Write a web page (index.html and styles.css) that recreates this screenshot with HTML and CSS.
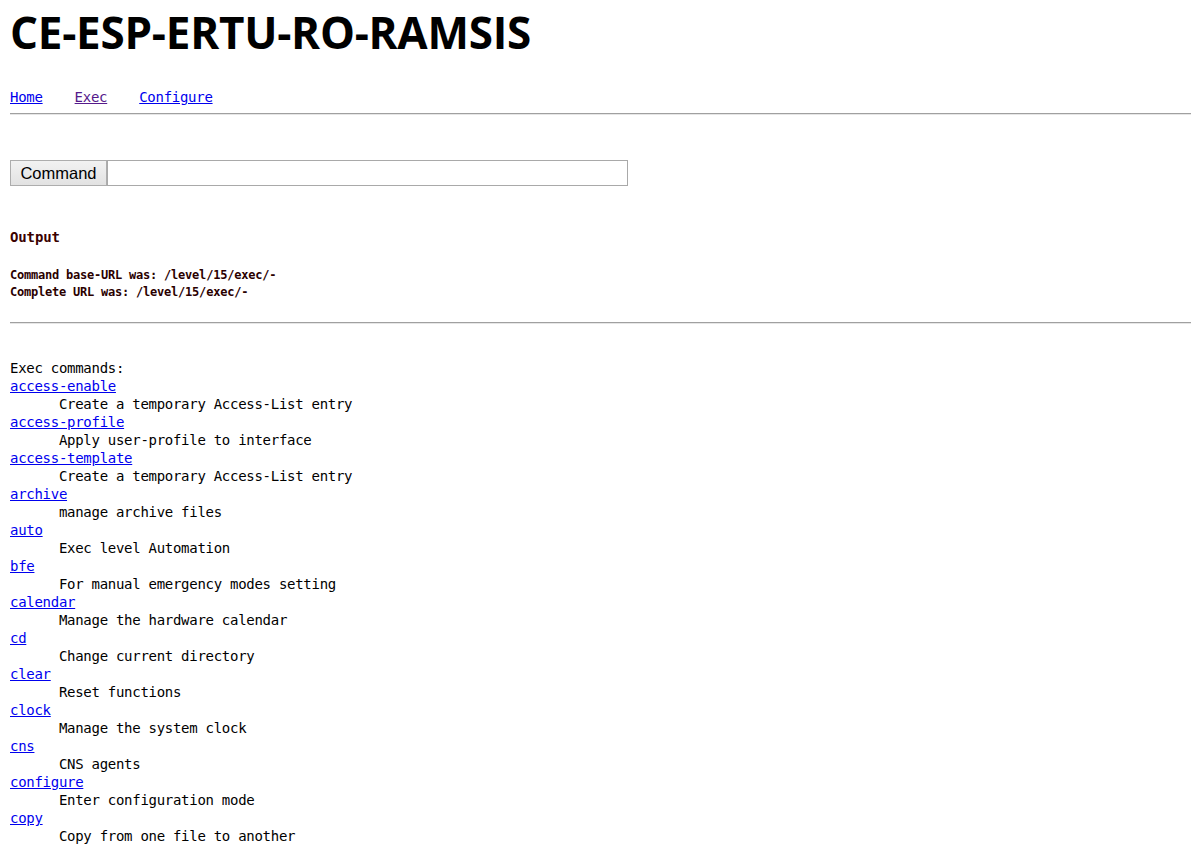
FILE: index.html
```html
<!DOCTYPE html>
<html>
<head>
<meta charset="utf-8">
<title>CE-ESP-ERTU-RO-RAMSIS</title>
<link rel="stylesheet" href="styles.css">
</head>
<body>
<h1 class="title">CE-ESP-ERTU-RO-RAMSIS</h1>
<nav class="nav"><a href="#home" class="link">Home</a><a href="#exec" class="link visited">Exec</a><a href="#configure" class="link">Configure</a></nav>
<hr class="rule">
<form class="cmd"><button type="button" class="cmd-btn">Command</button><input type="text" class="cmd-input"></form>
<h2 class="out-title">Output</h2>
<div class="out-text">Command base-URL was: /level/15/exec/-<br>Complete URL was: /level/15/exec/-</div>
<hr class="rule rule-2">
<pre class="list">Exec commands:
<a href="#" class="link">access-enable</a>
      Create a temporary Access-List entry
<a href="#" class="link">access-profile</a>
      Apply user-profile to interface
<a href="#" class="link">access-template</a>
      Create a temporary Access-List entry
<a href="#" class="link">archive</a>
      manage archive files
<a href="#" class="link">auto</a>
      Exec level Automation
<a href="#" class="link">bfe</a>
      For manual emergency modes setting
<a href="#" class="link">calendar</a>
      Manage the hardware calendar
<a href="#" class="link">cd</a>
      Change current directory
<a href="#" class="link">clear</a>
      Reset functions
<a href="#" class="link">clock</a>
      Manage the system clock
<a href="#" class="link">cns</a>
      CNS agents
<a href="#" class="link">configure</a>
      Enter configuration mode
<a href="#" class="link">copy</a>
      Copy from one file to another</pre>
</body>
</html>
```
FILE: styles.css
```css
html, body {
  margin: 0;
  padding: 0;
  background: #ffffff;
}
body {
  padding-left: 10px;
  color: #000000;
  font-family: "DejaVu Sans Mono", "Liberation Mono", monospace;
  overflow: hidden;
  height: 844px;
}
.title {
  margin: 10px 0 0 0;
  font-family: "Open Sans", "Noto Sans", sans-serif;
  font-weight: 700;
  font-size: 44px;
  line-height: 44px;
  letter-spacing: -0.25px;
}
.nav {
  margin-top: 34px;
  display: flex;
  gap: 32px;
  font-size: 14px;
  letter-spacing: -0.28px;
  line-height: 18px;
}
.link {
  color: #0000ee;
  text-decoration: underline;
}
.link.visited {
  color: #551a8b;
}
.rule {
  margin: 7px 0 0 0;
  height: 0;
  border: 0;
  border-top: 1px solid #a0a0a0;
  border-bottom: 1px solid #e6e6e6;
}
.rule-2 {
  margin-top: 21px;
}
.cmd {
  margin: 45px 0 0 0;
  display: flex;
  height: 26px;
}
.cmd-btn {
  width: 97px;
  height: 26px;
  margin: 0;
  padding: 0;
  font-family: "Liberation Sans", Arial, sans-serif;
  font-size: 16.5px;
  color: #000;
  background: linear-gradient(#f2f2f2, #e2e2e2);
  border: 1px solid #adadad;
  border-radius: 0;
}
.cmd-input {
  width: 521px;
  height: 26px;
  box-sizing: border-box;
  margin: 0;
  border: 1px solid #a9a9a9;
  border-radius: 0;
  padding: 0 2px;
  outline: none;
}
.out-title {
  margin: 42px 0 0 0;
  font-size: 14px;
  letter-spacing: -0.13px;
  line-height: 18px;
  font-weight: 700;
  color: #3a0000;
}
.out-text {
  margin-top: 21px;
  font-size: 12px;
  letter-spacing: -0.22px;
  line-height: 17px;
  font-weight: 700;
  color: #2a0000;
}
.list {
  margin: 35px 0 0 0;
  font-family: "DejaVu Sans Mono", "Liberation Mono", monospace;
  font-size: 14px;
  letter-spacing: -0.28px;
  line-height: 18px;
}
```
